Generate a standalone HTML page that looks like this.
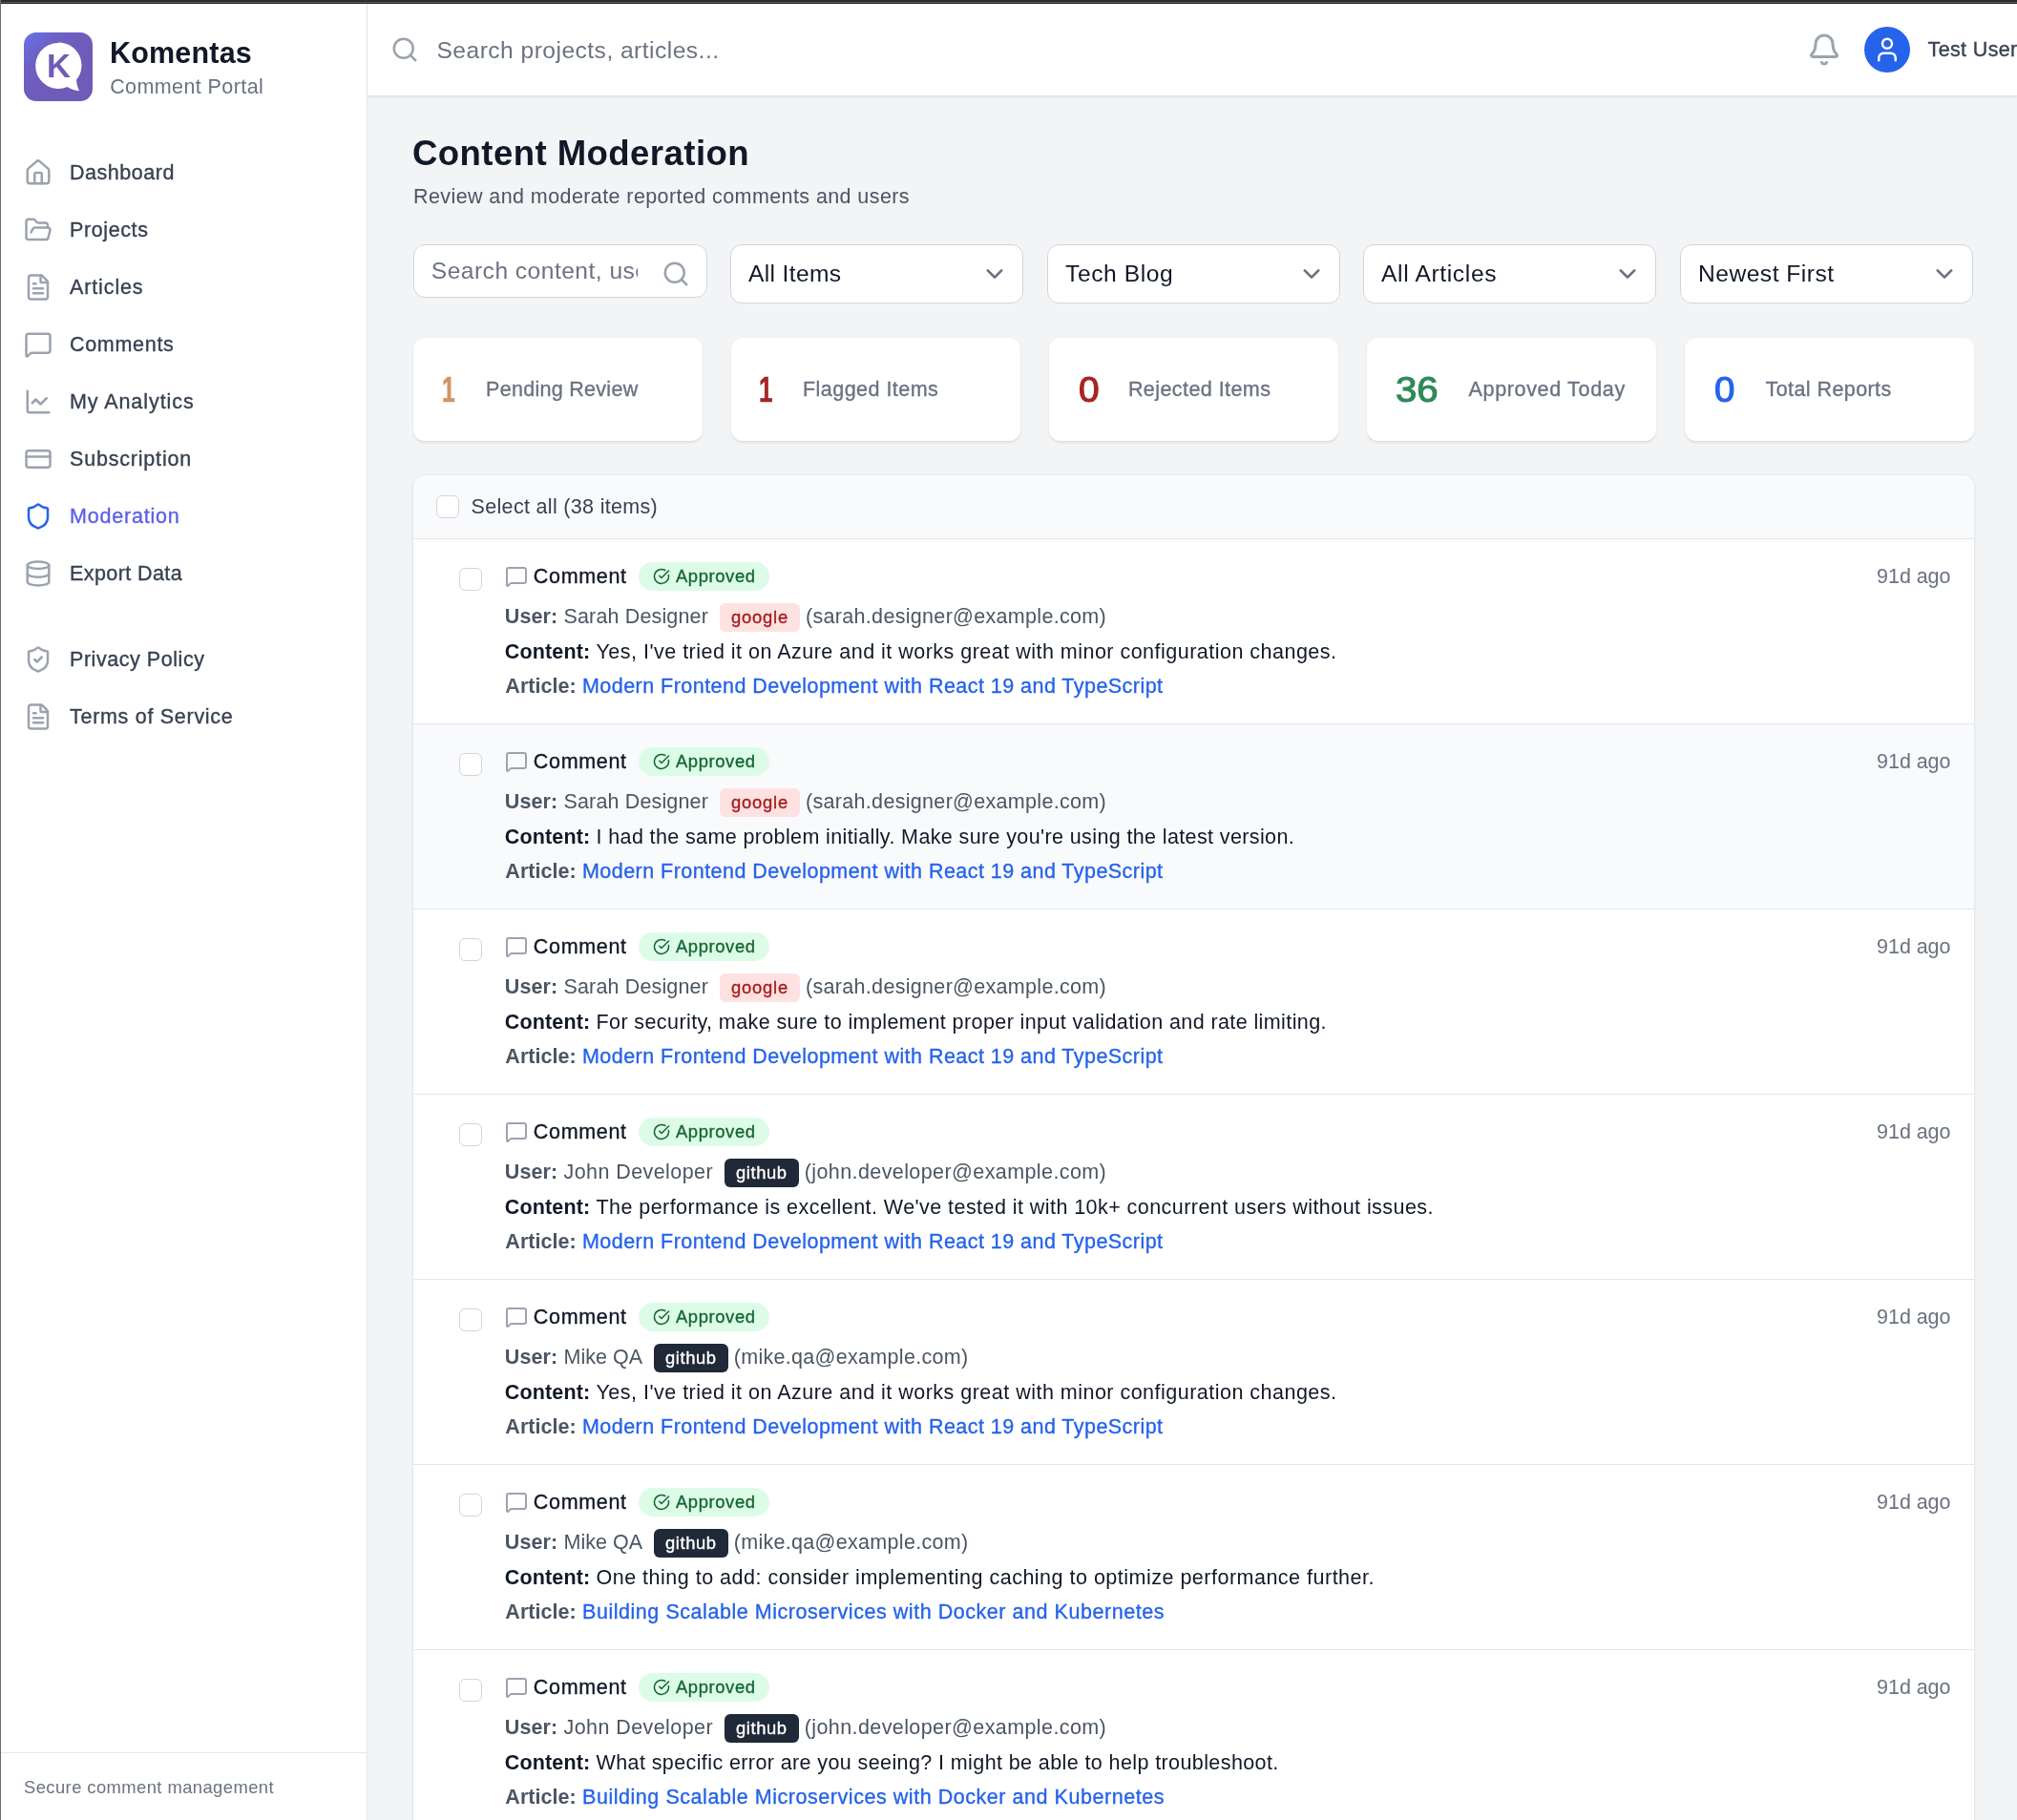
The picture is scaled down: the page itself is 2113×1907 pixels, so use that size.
<!DOCTYPE html><html lang="en"><head><meta charset="utf-8"><title>Content Moderation - Komentas</title><style>
*{box-sizing:border-box;margin:0;padding:0}
html,body{width:2113px;height:1907px;overflow:hidden}
body{position:relative;background:#f3f4f6;font-family:"Liberation Sans",sans-serif;color:#111827;-webkit-font-smoothing:antialiased}
span{white-space:pre}
svg{display:block}
.abs{position:absolute}
#topbar{left:0;top:0;width:2113px;height:4px;background:linear-gradient(#2c2c2c 0,#2c2c2c 2px,#595757 2px,#595757 3px,#242323 3px);z-index:50}
#leftbar{left:0;top:0;width:1px;height:1907px;background:#6b6b6b;z-index:51}
#side{left:1px;top:3px;width:384px;height:1904px;background:#fff;border-right:1px solid #e5e7eb}
#logo{left:24px;top:31px;width:72px;height:72px;border-radius:13px;background:linear-gradient(135deg,#6672ec 0%,#6d60c4 28%,#6f5bb8 55%,#6f5bb8 100%);overflow:hidden}
#brand{left:114px;top:31px;font-size:30.5px;line-height:42px;font-weight:700;color:#111827}
#brand2{left:114.2px;top:73px;font-size:21.5px;line-height:30px;color:#6b7280}
.nav{left:24px;height:60px;width:336px;display:flex;align-items:center;color:#374151;font-size:21.5px}
.nav svg{color:#9ca3af;margin-right:18px;flex:none}
.nav.act{color:#5b5fe9}
.nav.act svg{color:#2563eb}
#sfoot{left:0;top:1833px;width:383px;height:71px;border-top:1px solid #e5e7eb;font-size:18.4px;color:#6b7280;line-height:24px;padding:24.3px 0 0 24px}
#head{left:385px;top:3px;width:1728px;height:98px;background:#fff;border-bottom:1px solid #e2e4e9;box-shadow:0 1.5px 3px rgba(0,0,0,.06)}
#hs{left:24px;top:34px;color:#9ca3af}
#hst{left:72.5px;top:31.5px;font-size:24.6px;line-height:36px;color:#6b7280}
#bell{left:1508px;top:31px;color:#9ca3af}
#av{left:1568px;top:25px;width:48px;height:48px;border-radius:50%;background:#2563eb;color:#fff;display:flex;align-items:center;justify-content:center}
#un{left:1634.6px;top:34.3px;font-size:21.5px;line-height:30px;color:#374151}
#h1{left:432px;top:134px;font-size:36.6px;line-height:54px;font-weight:700;color:#111827}
#sub{left:432.5px;top:190.5px;font-size:21.5px;line-height:30px;color:#4b5563}
.inp{top:256px;height:56px;background:#fff;border:1.4px solid #d1d5db;border-radius:12px}
.sel{top:256px;height:61.5px;background:#fff;border:1.4px solid #d1d5db;border-radius:12px;font-size:24.6px;line-height:36px;color:#111827;padding:12px 0 0 18px}
.sel svg{position:absolute;right:11.5px;top:11.5px}
.stat{top:354px;width:303px;height:108px;background:#fff;border-radius:12px;box-shadow:0 1.5px 3px rgba(0,0,0,.08),0 1px 1px rgba(0,0,0,.03);display:block}
.stat .n{position:absolute;top:28.5px;font-size:37.4px;line-height:50px;font-weight:400;-webkit-text-stroke:1.1px currentColor;transform-origin:left center}
.stat .l{position:absolute;top:39px;font-size:21.5px;line-height:30px;color:#6b7280}
#list{left:432px;top:497px;width:1637px;height:1500px;background:#fff;border:1px solid #e5e7eb;border-radius:13px;overflow:hidden;box-shadow:0 1.5px 3px rgba(0,0,0,.05)}
#lh{left:0;top:0;width:1635px;height:67px;background:#f9fafb;border-bottom:1px solid #e5e7eb}
.cb{width:24px;height:24px;border:1.4px solid #d1d5db;border-radius:6px;background:#fff}
.item{left:0;width:1635px;height:194px;border-bottom:1px solid #e5e7eb}
.item.hov{background:#f9fafb}
.item .cb{left:48px;top:29.5px}
.r1{left:95.8px;top:23.5px;height:30px;display:flex;align-items:center;font-size:21.5px;line-height:30px;color:#111827}
.r1 svg.m{color:#9ca3af;margin-right:5.7px;margin-left:0.3px;position:relative;top:0.5px}
.bdg{display:inline-flex;align-items:center;height:30px;border-radius:15px;background:#dcfce7;color:#166534;font-size:18.4px;line-height:24px;padding:0 14.4px 0 15.6px;margin-left:12px}
.bdg svg{margin-right:5.6px}
.r2,.r3,.r4{left:95.8px;height:30px;font-size:21.5px;line-height:30px;display:flex;align-items:center}
.r2{top:65.5px;color:#4b5563}
.r3{top:102.5px;color:#111827}
.r4{top:139px;left:96.3px;color:#4b5563}
b{font-weight:700}
#side,#head,#list,.stat,.sel,.inp,#h1,#sub{will-change:transform}
.nav span,#un span,.stat .l span,.k-cmt,.bdg span,.pv span,.r4 a span{-webkit-text-stroke:0.35px currentColor}
.r2 b{color:#4b5563}
.r4 a{color:#2563eb;text-decoration:none}
.pv{position:relative;top:1px;display:inline-block;height:30px;line-height:30px;border-radius:6px;font-size:18.4px;padding:0 12px;margin:0 6px 0 12px}
.pv.g{background:#fee2e2;color:#a51d1d}
.pv.h{background:#1f2937;color:#fff}
.ago{right:24.6px;top:23.5px;font-size:21.5px;line-height:30px;color:#6b7280}
</style></head><body><div class="abs" id="topbar"></div><div class="abs" id="leftbar"></div><div class="abs" id="side"><div class="abs" id="logo"><svg width="72" height="72" viewBox="0 0 72 72"><path d="M36 10.9a24 24 0 1 0 9.5 46.1c4 2.6 8.3 4 12.6 4.2c-1.9-3.6-2.9-7.6-3-11.600A24 24 0 0 0 36 10.500z" fill="#fff"/><text x="36.4" y="46.9" text-anchor="middle" font-family="Liberation Sans, sans-serif" font-weight="700" font-size="34.6" fill="#6f5bb8">K</text></svg></div><div class="abs" id="brand"><span class="k-brand" style="letter-spacing:0.193px">Komentas</span></div><div class="abs" id="brand2"><span class="k-brand2" style="letter-spacing:0.404px">Comment Portal</span></div><div class="abs nav" style="top:148px"><svg width="30" height="30" viewBox="0 0 24 24" fill="none" stroke="currentColor" stroke-width="2" stroke-linecap="round" stroke-linejoin="round" ><path d="M15 21v-8a1 1 0 0 0-1-1h-4a1 1 0 0 0-1 1v8"/><path d="M3 10a2 2 0 0 1 .709-1.528l7-5.999a2 2 0 0 1 2.582 0l7 5.999A2 2 0 0 1 21 10v9a2 2 0 0 1-2 2H5a2 2 0 0 1-2-2z"/></svg><span class="k-nav_dash" style="letter-spacing:0.535px">Dashboard</span></div><div class="abs nav" style="top:208px"><svg width="30" height="30" viewBox="0 0 24 24" fill="none" stroke="currentColor" stroke-width="2" stroke-linecap="round" stroke-linejoin="round" ><path d="m6 14 1.5-2.9A2 2 0 0 1 9.24 10H20a2 2 0 0 1 1.94 2.5l-1.54 6a2 2 0 0 1-1.95 1.5H4a2 2 0 0 1-2-2V5a2 2 0 0 1 2-2h3.9a2 2 0 0 1 1.69.9l.81 1.2a2 2 0 0 0 1.67.9H18a2 2 0 0 1 2 2v2"/></svg><span class="k-nav_proj" style="letter-spacing:0.604px">Projects</span></div><div class="abs nav" style="top:268px"><svg width="30" height="30" viewBox="0 0 24 24" fill="none" stroke="currentColor" stroke-width="2" stroke-linecap="round" stroke-linejoin="round" ><path d="M6 22a2 2 0 0 1-2-2V4a2 2 0 0 1 2-2h8a2.4 2.4 0 0 1 1.704.706l3.588 3.588A2.4 2.4 0 0 1 20 8v12a2 2 0 0 1-2 2z"/><path d="M14 2v5a1 1 0 0 0 1 1h5"/><path d="M10 9H8"/><path d="M16 13H8"/><path d="M16 17H8"/></svg><span class="k-nav_art" style="letter-spacing:0.877px">Articles</span></div><div class="abs nav" style="top:328px"><svg width="30" height="30" viewBox="0 0 24 24" fill="none" stroke="currentColor" stroke-width="2" stroke-linecap="round" stroke-linejoin="round" ><path d="M22 17a2 2 0 0 1-2 2H6.828a2 2 0 0 0-1.414.586l-2.202 2.202A.71.71 0 0 1 2 21.286V5a2 2 0 0 1 2-2h16a2 2 0 0 1 2 2z"/></svg><span class="k-nav_com" style="letter-spacing:0.693px">Comments</span></div><div class="abs nav" style="top:388px"><svg width="30" height="30" viewBox="0 0 24 24" fill="none" stroke="currentColor" stroke-width="2" stroke-linecap="round" stroke-linejoin="round" ><path d="M3 3v16a2 2 0 0 0 2 2h16"/><path d="m19 9-5 5-4-4-3 3"/></svg><span class="k-nav_ana" style="letter-spacing:0.926px">My Analytics</span></div><div class="abs nav" style="top:448px"><svg width="30" height="30" viewBox="0 0 24 24" fill="none" stroke="currentColor" stroke-width="2" stroke-linecap="round" stroke-linejoin="round" ><rect width="20" height="14" x="2" y="5" rx="2"/><line x1="2" x2="22" y1="10" y2="10"/></svg><span class="k-nav_sub" style="letter-spacing:0.806px">Subscription</span></div><div class="abs nav act" style="top:508px"><svg width="30" height="30" viewBox="0 0 24 24" fill="none" stroke="currentColor" stroke-width="2" stroke-linecap="round" stroke-linejoin="round" ><path d="M20 13c0 5-3.5 7.5-7.66 8.95a1 1 0 0 1-.67-.01C7.5 20.5 4 18 4 13V6a1 1 0 0 1 1-1c2 0 4.5-1.2 6.24-2.72a1.17 1.17 0 0 1 1.52 0C14.51 3.81 17 5 19 5a1 1 0 0 1 1 1z"/></svg><span class="k-nav_mod" style="letter-spacing:0.792px">Moderation</span></div><div class="abs nav" style="top:568px"><svg width="30" height="30" viewBox="0 0 24 24" fill="none" stroke="currentColor" stroke-width="2" stroke-linecap="round" stroke-linejoin="round" ><ellipse cx="12" cy="5" rx="9" ry="3"/><path d="M3 5V19A9 3 0 0 0 21 19V5"/><path d="M3 12A9 3 0 0 0 21 12"/></svg><span class="k-nav_exp" style="letter-spacing:0.406px">Export Data</span></div><div class="abs nav" style="top:658px"><svg width="30" height="30" viewBox="0 0 24 24" fill="none" stroke="currentColor" stroke-width="2" stroke-linecap="round" stroke-linejoin="round" ><path d="M20 13c0 5-3.5 7.5-7.66 8.95a1 1 0 0 1-.67-.01C7.5 20.5 4 18 4 13V6a1 1 0 0 1 1-1c2 0 4.5-1.2 6.24-2.72a1.17 1.17 0 0 1 1.52 0C14.51 3.81 17 5 19 5a1 1 0 0 1 1 1z"/><path d="m9 12 2 2 4-4"/></svg><span class="k-nav_priv" style="letter-spacing:0.549px">Privacy Policy</span></div><div class="abs nav" style="top:718px"><svg width="30" height="30" viewBox="0 0 24 24" fill="none" stroke="currentColor" stroke-width="2" stroke-linecap="round" stroke-linejoin="round" ><path d="M6 22a2 2 0 0 1-2-2V4a2 2 0 0 1 2-2h8a2.4 2.4 0 0 1 1.704.706l3.588 3.588A2.4 2.4 0 0 1 20 8v12a2 2 0 0 1-2 2z"/><path d="M14 2v5a1 1 0 0 0 1 1h5"/><path d="M10 9H8"/><path d="M16 13H8"/><path d="M16 17H8"/></svg><span class="k-nav_tos" style="letter-spacing:0.712px">Terms of Service</span></div><div class="abs" id="sfoot"><span class="k-sfoot" style="letter-spacing:0.421px">Secure comment management</span></div></div><div class="abs" id="head"><div class="abs" id="hs"><svg width="30" height="30" viewBox="0 0 24 24" fill="none" stroke="currentColor" stroke-width="2" stroke-linecap="round" stroke-linejoin="round" ><circle cx="11" cy="11" r="8"/><path d="m21 21-4.3-4.3"/></svg></div><div class="abs" id="hst"><span class="k-hst" style="letter-spacing:0.467px">Search projects, articles...</span></div><div class="abs" id="bell"><svg width="36" height="36" viewBox="0 0 24 24" fill="none" stroke="currentColor" stroke-width="2" stroke-linecap="round" stroke-linejoin="round" ><path d="M10.268 21a2 2 0 0 0 3.464 0"/><path d="M3.262 15.326A1 1 0 0 0 4 17h16a1 1 0 0 0 .74-1.673C19.41 13.956 18 12.499 18 8A6 6 0 0 0 6 8c0 4.499-1.411 5.956-2.738 7.326"/></svg></div><div class="abs" id="av"><svg width="30" height="30" viewBox="0 0 24 24" fill="none" stroke="currentColor" stroke-width="2" stroke-linecap="round" stroke-linejoin="round" ><path d="M19 21v-2a4 4 0 0 0-4-4H9a4 4 0 0 0-4 4v2"/><circle cx="12" cy="7" r="4"/></svg></div><div class="abs" id="un"><span class="k-un" style="letter-spacing:0.354px">Test User</span></div></div><div class="abs" id="h1"><span class="k-h1" style="letter-spacing:0.421px">Content Moderation</span></div><div class="abs" id="sub"><span class="k-sub" style="letter-spacing:0.410px">Review and moderate reported comments and users</span></div><div class="abs inp" style="left:433px;width:308px"><div class="abs" style="left:17.8px;top:9px;width:215.8px;height:36px;overflow:hidden;font-size:24.6px;line-height:36px;color:#6b7280"><span class="k-fs" style="letter-spacing:0.468px">Search content, us</span><span class="fsr">ers...</span></div><div class="abs" style="left:258.5px;top:15px;color:#9ca3af"><svg width="30" height="30" viewBox="0 0 24 24" fill="none" stroke="currentColor" stroke-width="2" stroke-linecap="round" stroke-linejoin="round" ><circle cx="11" cy="11" r="8"/><path d="m21 21-4.3-4.3"/></svg></div></div><div class="abs sel" style="left:765.4px;width:307px"><span class="k-s1" style="letter-spacing:0.356px">All Items</span><svg width="36" height="36" viewBox="0 0 20 20" fill="none"><path d="M6 8l4 4 4-4" stroke="#6b7280" stroke-width="1.5" stroke-linecap="round" stroke-linejoin="round"/></svg></div><div class="abs sel" style="left:1097.0px;width:307px"><span class="k-s2" style="letter-spacing:0.587px">Tech Blog</span><svg width="36" height="36" viewBox="0 0 20 20" fill="none"><path d="M6 8l4 4 4-4" stroke="#6b7280" stroke-width="1.5" stroke-linecap="round" stroke-linejoin="round"/></svg></div><div class="abs sel" style="left:1428.4px;width:307px"><span class="k-s3" style="letter-spacing:0.647px">All Articles</span><svg width="36" height="36" viewBox="0 0 20 20" fill="none"><path d="M6 8l4 4 4-4" stroke="#6b7280" stroke-width="1.5" stroke-linecap="round" stroke-linejoin="round"/></svg></div><div class="abs sel" style="left:1760.3px;width:307px"><span class="k-s4" style="letter-spacing:0.495px">Newest First</span><svg width="36" height="36" viewBox="0 0 20 20" fill="none"><path d="M6 8l4 4 4-4" stroke="#6b7280" stroke-width="1.5" stroke-linecap="round" stroke-linejoin="round"/></svg></div><div class="abs stat" style="left:433px"><div class="n st1n" style="left:29.7px;color:#cf9566;transform:scaleX(0.66);font-weight:700;-webkit-text-stroke:0.5px currentColor">1</div><div class="l" style="left:76.0px"><span class="k-st1" style="letter-spacing:0.295px">Pending Review</span></div></div><div class="abs stat" style="left:766px"><div class="n st2n" style="left:29.2px;color:#a72424;transform:scaleX(0.7);font-weight:700;-webkit-text-stroke:0.5px currentColor">1</div><div class="l" style="left:75.0px"><span class="k-st2" style="letter-spacing:0.467px">Flagged Items</span></div></div><div class="abs stat" style="left:1099px"><div class="n st3n" style="left:31.2px;color:#a72424;transform:scaleX(1.04);font-weight:400">0</div><div class="l" style="left:82.9px"><span class="k-st3" style="letter-spacing:0.435px">Rejected Items</span></div></div><div class="abs stat" style="left:1432px"><div class="n st4n" style="left:30.4px;color:#2f8a57;transform:scaleX(1.075);font-weight:400">36</div><div class="l" style="left:106.5px"><span class="k-st4" style="letter-spacing:0.664px">Approved Today</span></div></div><div class="abs stat" style="left:1765px"><div class="n st5n" style="left:31.0px;color:#2563eb;transform:scaleX(1.03);font-weight:400">0</div><div class="l" style="left:84.5px"><span class="k-st5" style="letter-spacing:0.425px">Total Reports</span></div></div><div class="abs" id="list"><div class="abs" id="lh"><div class="abs cb" style="left:24px;top:20.5px"></div><div class="abs" style="left:60.6px;top:18.3px;font-size:21.5px;line-height:30px;color:#374151"><span class="k-selall" style="letter-spacing:0.319px">Select all (38 items)</span></div></div><div class="abs item" style="top:67px"><div class="abs cb"></div><div class="abs r1"><svg width="24" height="24" viewBox="0 0 24 24" fill="none" stroke="currentColor" stroke-width="2" stroke-linecap="round" stroke-linejoin="round" class="m"><path d="M22 17a2 2 0 0 1-2 2H6.828a2 2 0 0 0-1.414.586l-2.202 2.202A.71.71 0 0 1 2 21.286V5a2 2 0 0 1 2-2h16a2 2 0 0 1 2 2z"/></svg><span class="k-cmt" style="letter-spacing:0.685px">Comment</span><span class="bdg"><svg width="18" height="18" viewBox="0 0 24 24" fill="none" stroke="currentColor" stroke-width="2" stroke-linecap="round" stroke-linejoin="round" ><path d="M21.801 10A10 10 0 1 1 17 3.335"/><path d="m9 11 3 3L22 4"/></svg><span class="k-appr" style="letter-spacing:0.608px">Approved</span></span></div><div class="abs ago"><span class="k-ago" style="letter-spacing:-0.060px">91d ago</span></div><div class="abs r2"><b><span class="k-lu" style="letter-spacing:0.106px">User:</span></b><span class="k-sp1" style="letter-spacing:0.216px"> </span><span class="k-u1n" style="letter-spacing:0.151px">Sarah Designer</span><span class="pv g"><span class="k-pvg" style="letter-spacing:0.794px">google</span></span><span class="k-u1e" style="letter-spacing:0.313px">(sarah.designer@example.com)</span></div><div class="abs r3"><b><span class="k-lc" style="letter-spacing:0.141px">Content:</span></b><span class="k-sp2" style="letter-spacing:0.216px"> </span><span class="k-c1" style="letter-spacing:0.486px">Yes, I've tried it on Azure and it works great with minor configuration changes.</span></div><div class="abs r4"><b><span class="k-la" style="letter-spacing:0.053px">Article:</span></b><span class="k-sp3" style="letter-spacing:0.216px"> </span><a><span class="k-a1" style="letter-spacing:0.459px">Modern Frontend Development with React 19 and TypeScript</span></a></div></div><div class="abs item hov" style="top:261px"><div class="abs cb"></div><div class="abs r1"><svg width="24" height="24" viewBox="0 0 24 24" fill="none" stroke="currentColor" stroke-width="2" stroke-linecap="round" stroke-linejoin="round" class="m"><path d="M22 17a2 2 0 0 1-2 2H6.828a2 2 0 0 0-1.414.586l-2.202 2.202A.71.71 0 0 1 2 21.286V5a2 2 0 0 1 2-2h16a2 2 0 0 1 2 2z"/></svg><span class="k-cmt" style="letter-spacing:0.685px">Comment</span><span class="bdg"><svg width="18" height="18" viewBox="0 0 24 24" fill="none" stroke="currentColor" stroke-width="2" stroke-linecap="round" stroke-linejoin="round" ><path d="M21.801 10A10 10 0 1 1 17 3.335"/><path d="m9 11 3 3L22 4"/></svg><span class="k-appr" style="letter-spacing:0.608px">Approved</span></span></div><div class="abs ago"><span class="k-ago" style="letter-spacing:-0.060px">91d ago</span></div><div class="abs r2"><b><span class="k-lu" style="letter-spacing:0.106px">User:</span></b><span class="k-sp1" style="letter-spacing:0.216px"> </span><span class="k-u1n" style="letter-spacing:0.151px">Sarah Designer</span><span class="pv g"><span class="k-pvg" style="letter-spacing:0.794px">google</span></span><span class="k-u1e" style="letter-spacing:0.313px">(sarah.designer@example.com)</span></div><div class="abs r3"><b><span class="k-lc" style="letter-spacing:0.141px">Content:</span></b><span class="k-sp2" style="letter-spacing:0.216px"> </span><span class="k-c2" style="letter-spacing:0.379px">I had the same problem initially. Make sure you're using the latest version.</span></div><div class="abs r4"><b><span class="k-la" style="letter-spacing:0.053px">Article:</span></b><span class="k-sp3" style="letter-spacing:0.216px"> </span><a><span class="k-a1" style="letter-spacing:0.459px">Modern Frontend Development with React 19 and TypeScript</span></a></div></div><div class="abs item" style="top:455px"><div class="abs cb"></div><div class="abs r1"><svg width="24" height="24" viewBox="0 0 24 24" fill="none" stroke="currentColor" stroke-width="2" stroke-linecap="round" stroke-linejoin="round" class="m"><path d="M22 17a2 2 0 0 1-2 2H6.828a2 2 0 0 0-1.414.586l-2.202 2.202A.71.71 0 0 1 2 21.286V5a2 2 0 0 1 2-2h16a2 2 0 0 1 2 2z"/></svg><span class="k-cmt" style="letter-spacing:0.685px">Comment</span><span class="bdg"><svg width="18" height="18" viewBox="0 0 24 24" fill="none" stroke="currentColor" stroke-width="2" stroke-linecap="round" stroke-linejoin="round" ><path d="M21.801 10A10 10 0 1 1 17 3.335"/><path d="m9 11 3 3L22 4"/></svg><span class="k-appr" style="letter-spacing:0.608px">Approved</span></span></div><div class="abs ago"><span class="k-ago" style="letter-spacing:-0.060px">91d ago</span></div><div class="abs r2"><b><span class="k-lu" style="letter-spacing:0.106px">User:</span></b><span class="k-sp1" style="letter-spacing:0.216px"> </span><span class="k-u1n" style="letter-spacing:0.151px">Sarah Designer</span><span class="pv g"><span class="k-pvg" style="letter-spacing:0.794px">google</span></span><span class="k-u1e" style="letter-spacing:0.313px">(sarah.designer@example.com)</span></div><div class="abs r3"><b><span class="k-lc" style="letter-spacing:0.141px">Content:</span></b><span class="k-sp2" style="letter-spacing:0.216px"> </span><span class="k-c3" style="letter-spacing:0.407px">For security, make sure to implement proper input validation and rate limiting.</span></div><div class="abs r4"><b><span class="k-la" style="letter-spacing:0.053px">Article:</span></b><span class="k-sp3" style="letter-spacing:0.216px"> </span><a><span class="k-a1" style="letter-spacing:0.459px">Modern Frontend Development with React 19 and TypeScript</span></a></div></div><div class="abs item" style="top:649px"><div class="abs cb"></div><div class="abs r1"><svg width="24" height="24" viewBox="0 0 24 24" fill="none" stroke="currentColor" stroke-width="2" stroke-linecap="round" stroke-linejoin="round" class="m"><path d="M22 17a2 2 0 0 1-2 2H6.828a2 2 0 0 0-1.414.586l-2.202 2.202A.71.71 0 0 1 2 21.286V5a2 2 0 0 1 2-2h16a2 2 0 0 1 2 2z"/></svg><span class="k-cmt" style="letter-spacing:0.685px">Comment</span><span class="bdg"><svg width="18" height="18" viewBox="0 0 24 24" fill="none" stroke="currentColor" stroke-width="2" stroke-linecap="round" stroke-linejoin="round" ><path d="M21.801 10A10 10 0 1 1 17 3.335"/><path d="m9 11 3 3L22 4"/></svg><span class="k-appr" style="letter-spacing:0.608px">Approved</span></span></div><div class="abs ago"><span class="k-ago" style="letter-spacing:-0.060px">91d ago</span></div><div class="abs r2"><b><span class="k-lu" style="letter-spacing:0.106px">User:</span></b><span class="k-sp1" style="letter-spacing:0.216px"> </span><span class="k-u2n" style="letter-spacing:0.421px">John Developer</span><span class="pv h"><span class="k-pvh" style="letter-spacing:0.598px">github</span></span><span class="k-u2e" style="letter-spacing:0.408px">(john.developer@example.com)</span></div><div class="abs r3"><b><span class="k-lc" style="letter-spacing:0.141px">Content:</span></b><span class="k-sp2" style="letter-spacing:0.216px"> </span><span class="k-c4" style="letter-spacing:0.443px">The performance is excellent. We've tested it with 10k+ concurrent users without issues.</span></div><div class="abs r4"><b><span class="k-la" style="letter-spacing:0.053px">Article:</span></b><span class="k-sp3" style="letter-spacing:0.216px"> </span><a><span class="k-a1" style="letter-spacing:0.459px">Modern Frontend Development with React 19 and TypeScript</span></a></div></div><div class="abs item" style="top:843px"><div class="abs cb"></div><div class="abs r1"><svg width="24" height="24" viewBox="0 0 24 24" fill="none" stroke="currentColor" stroke-width="2" stroke-linecap="round" stroke-linejoin="round" class="m"><path d="M22 17a2 2 0 0 1-2 2H6.828a2 2 0 0 0-1.414.586l-2.202 2.202A.71.71 0 0 1 2 21.286V5a2 2 0 0 1 2-2h16a2 2 0 0 1 2 2z"/></svg><span class="k-cmt" style="letter-spacing:0.685px">Comment</span><span class="bdg"><svg width="18" height="18" viewBox="0 0 24 24" fill="none" stroke="currentColor" stroke-width="2" stroke-linecap="round" stroke-linejoin="round" ><path d="M21.801 10A10 10 0 1 1 17 3.335"/><path d="m9 11 3 3L22 4"/></svg><span class="k-appr" style="letter-spacing:0.608px">Approved</span></span></div><div class="abs ago"><span class="k-ago" style="letter-spacing:-0.060px">91d ago</span></div><div class="abs r2"><b><span class="k-lu" style="letter-spacing:0.106px">User:</span></b><span class="k-sp1" style="letter-spacing:0.216px"> </span><span class="k-u3n" style="letter-spacing:0.009px">Mike QA</span><span class="pv h"><span class="k-pvh" style="letter-spacing:0.598px">github</span></span><span class="k-u3e" style="letter-spacing:0.310px">(mike.qa@example.com)</span></div><div class="abs r3"><b><span class="k-lc" style="letter-spacing:0.141px">Content:</span></b><span class="k-sp2" style="letter-spacing:0.216px"> </span><span class="k-c1" style="letter-spacing:0.486px">Yes, I've tried it on Azure and it works great with minor configuration changes.</span></div><div class="abs r4"><b><span class="k-la" style="letter-spacing:0.053px">Article:</span></b><span class="k-sp3" style="letter-spacing:0.216px"> </span><a><span class="k-a1" style="letter-spacing:0.459px">Modern Frontend Development with React 19 and TypeScript</span></a></div></div><div class="abs item" style="top:1037px"><div class="abs cb"></div><div class="abs r1"><svg width="24" height="24" viewBox="0 0 24 24" fill="none" stroke="currentColor" stroke-width="2" stroke-linecap="round" stroke-linejoin="round" class="m"><path d="M22 17a2 2 0 0 1-2 2H6.828a2 2 0 0 0-1.414.586l-2.202 2.202A.71.71 0 0 1 2 21.286V5a2 2 0 0 1 2-2h16a2 2 0 0 1 2 2z"/></svg><span class="k-cmt" style="letter-spacing:0.685px">Comment</span><span class="bdg"><svg width="18" height="18" viewBox="0 0 24 24" fill="none" stroke="currentColor" stroke-width="2" stroke-linecap="round" stroke-linejoin="round" ><path d="M21.801 10A10 10 0 1 1 17 3.335"/><path d="m9 11 3 3L22 4"/></svg><span class="k-appr" style="letter-spacing:0.608px">Approved</span></span></div><div class="abs ago"><span class="k-ago" style="letter-spacing:-0.060px">91d ago</span></div><div class="abs r2"><b><span class="k-lu" style="letter-spacing:0.106px">User:</span></b><span class="k-sp1" style="letter-spacing:0.216px"> </span><span class="k-u3n" style="letter-spacing:0.009px">Mike QA</span><span class="pv h"><span class="k-pvh" style="letter-spacing:0.598px">github</span></span><span class="k-u3e" style="letter-spacing:0.310px">(mike.qa@example.com)</span></div><div class="abs r3"><b><span class="k-lc" style="letter-spacing:0.141px">Content:</span></b><span class="k-sp2" style="letter-spacing:0.216px"> </span><span class="k-c6" style="letter-spacing:0.498px">One thing to add: consider implementing caching to optimize performance further.</span></div><div class="abs r4"><b><span class="k-la" style="letter-spacing:0.053px">Article:</span></b><span class="k-sp3" style="letter-spacing:0.216px"> </span><a><span class="k-a2" style="letter-spacing:0.545px">Building Scalable Microservices with Docker and Kubernetes</span></a></div></div><div class="abs item" style="top:1231px"><div class="abs cb"></div><div class="abs r1"><svg width="24" height="24" viewBox="0 0 24 24" fill="none" stroke="currentColor" stroke-width="2" stroke-linecap="round" stroke-linejoin="round" class="m"><path d="M22 17a2 2 0 0 1-2 2H6.828a2 2 0 0 0-1.414.586l-2.202 2.202A.71.71 0 0 1 2 21.286V5a2 2 0 0 1 2-2h16a2 2 0 0 1 2 2z"/></svg><span class="k-cmt" style="letter-spacing:0.685px">Comment</span><span class="bdg"><svg width="18" height="18" viewBox="0 0 24 24" fill="none" stroke="currentColor" stroke-width="2" stroke-linecap="round" stroke-linejoin="round" ><path d="M21.801 10A10 10 0 1 1 17 3.335"/><path d="m9 11 3 3L22 4"/></svg><span class="k-appr" style="letter-spacing:0.608px">Approved</span></span></div><div class="abs ago"><span class="k-ago" style="letter-spacing:-0.060px">91d ago</span></div><div class="abs r2"><b><span class="k-lu" style="letter-spacing:0.106px">User:</span></b><span class="k-sp1" style="letter-spacing:0.216px"> </span><span class="k-u2n" style="letter-spacing:0.421px">John Developer</span><span class="pv h"><span class="k-pvh" style="letter-spacing:0.598px">github</span></span><span class="k-u2e" style="letter-spacing:0.408px">(john.developer@example.com)</span></div><div class="abs r3"><b><span class="k-lc" style="letter-spacing:0.141px">Content:</span></b><span class="k-sp2" style="letter-spacing:0.216px"> </span><span class="k-c7" style="letter-spacing:0.400px">What specific error are you seeing? I might be able to help troubleshoot.</span></div><div class="abs r4"><b><span class="k-la" style="letter-spacing:0.053px">Article:</span></b><span class="k-sp3" style="letter-spacing:0.216px"> </span><a><span class="k-a2" style="letter-spacing:0.545px">Building Scalable Microservices with Docker and Kubernetes</span></a></div></div></div></body></html>
